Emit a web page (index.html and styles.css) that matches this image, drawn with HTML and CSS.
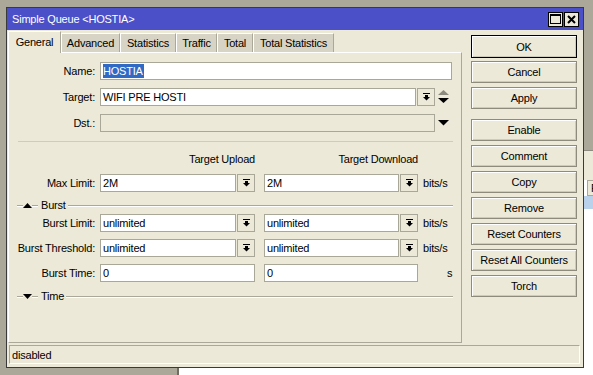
FILE: index.html
```html
<!DOCTYPE html>
<html>
<head>
<meta charset="utf-8">
<link rel="stylesheet" href="styles.css">
</head>
<body>
<div class="desktop">
  <div class="bgwin">
    <div class="bg-tool"></div>
    <div class="bg-head"><span class="bg-cell">F</span></div>
    <div class="bg-sel"></div>
  </div>

  <div class="window">
    <div class="titlebar">
      <span class="title">Simple Queue &lt;HOSTIA&gt;</span>
      <div class="tbtns">
        <span class="tbtn"><svg width="11" height="10" viewBox="0 0 11 10"><rect x="0.5" y="0.5" width="10" height="9" fill="none" stroke="#000"/><rect x="0" y="0" width="11" height="2" fill="#000"/></svg></span>
        <span class="tbtn"><svg width="9" height="9" viewBox="0 0 9 9"><path d="M1 1 L8 8 M8 1 L1 8" stroke="#000" stroke-width="2"/></svg></span>
      </div>
    </div>

    <div class="main">
      <div class="left">
        <div class="tabs">
          <span class="tab active w1">General</span>
          <span class="tab w2">Advanced</span>
          <span class="tab w3">Statistics</span>
          <span class="tab w4">Traffic</span>
          <span class="tab w5">Total</span>
          <span class="tab w6">Total Statistics</span>
        </div>
        <div class="panel">
          <div class="row first">
            <span class="lbl">Name:</span>
            <span class="inp w-name"><span class="sel">HOSTIA</span></span>
          </div>
          <div class="row">
            <span class="lbl">Target:</span>
            <span class="inp w-target">WIFI PRE HOSTI</span>
            <span class="dd"><svg width="7" height="8" viewBox="0 0 7 8"><rect x="0" y="0" width="7" height="1" fill="#000"/><rect x="2" y="2" width="3" height="2" fill="#000"/><path d="M0 4 L7 4 L3.5 7.5 Z" fill="#000"/></svg></span>
            <span class="arrows"><svg width="11" height="14" viewBox="0 0 11 14"><path d="M0 5 L11 5 L5.5 0 Z" fill="#8c8a7e"/><path d="M0 8 L11 8 L5.5 13 Z" fill="#000"/></svg></span>
          </div>
          <div class="row">
            <span class="lbl">Dst.:</span>
            <span class="inp dis w-dst"></span>
            <span class="arrows"><svg width="11" height="6" viewBox="0 0 11 6"><path d="M0 0 L11 0 L5.5 5.5 Z" fill="#000"/></svg></span>
          </div>
          <div class="sep"></div>
          <div class="hrow">
            <span class="lblsp"></span>
            <span class="col hcol">Target Upload</span>
            <span class="col col2 hcol">Target Download</span>
          </div>
          <div class="row">
            <span class="lbl">Max Limit:</span>
            <span class="col"><span class="inp grow">2M</span><span class="dd"><svg width="7" height="8" viewBox="0 0 7 8"><rect x="0" y="0" width="7" height="1" fill="#000"/><rect x="2" y="2" width="3" height="2" fill="#000"/><path d="M0 4 L7 4 L3.5 7.5 Z" fill="#000"/></svg></span></span>
            <span class="col col2"><span class="inp grow">2M</span><span class="dd"><svg width="7" height="8" viewBox="0 0 7 8"><rect x="0" y="0" width="7" height="1" fill="#000"/><rect x="2" y="2" width="3" height="2" fill="#000"/><path d="M0 4 L7 4 L3.5 7.5 Z" fill="#000"/></svg></span></span>
            <span class="unit">bits/s</span>
          </div>
          <div class="ghead">
            <span class="gl short"></span>
            <svg class="gtri" width="9" height="5" viewBox="0 0 9 5"><path d="M0 5 L9 5 L4.5 0 Z" fill="#000"/></svg>
            <span class="gl short"></span>
            <span class="gtext">Burst</span>
            <span class="gl long"></span>
          </div>
          <div class="row tight first-b">
            <span class="lbl">Burst Limit:</span>
            <span class="col"><span class="inp grow">unlimited</span><span class="dd"><svg width="7" height="8" viewBox="0 0 7 8"><rect x="0" y="0" width="7" height="1" fill="#000"/><rect x="2" y="2" width="3" height="2" fill="#000"/><path d="M0 4 L7 4 L3.5 7.5 Z" fill="#000"/></svg></span></span>
            <span class="col col2"><span class="inp grow">unlimited</span><span class="dd"><svg width="7" height="8" viewBox="0 0 7 8"><rect x="0" y="0" width="7" height="1" fill="#000"/><rect x="2" y="2" width="3" height="2" fill="#000"/><path d="M0 4 L7 4 L3.5 7.5 Z" fill="#000"/></svg></span></span>
            <span class="unit">bits/s</span>
          </div>
          <div class="row tight">
            <span class="lbl">Burst Threshold:</span>
            <span class="col"><span class="inp grow">unlimited</span><span class="dd"><svg width="7" height="8" viewBox="0 0 7 8"><rect x="0" y="0" width="7" height="1" fill="#000"/><rect x="2" y="2" width="3" height="2" fill="#000"/><path d="M0 4 L7 4 L3.5 7.5 Z" fill="#000"/></svg></span></span>
            <span class="col col2"><span class="inp grow">unlimited</span><span class="dd"><svg width="7" height="8" viewBox="0 0 7 8"><rect x="0" y="0" width="7" height="1" fill="#000"/><rect x="2" y="2" width="3" height="2" fill="#000"/><path d="M0 4 L7 4 L3.5 7.5 Z" fill="#000"/></svg></span></span>
            <span class="unit">bits/s</span>
          </div>
          <div class="row tight">
            <span class="lbl">Burst Time:</span>
            <span class="col"><span class="inp grow">0</span></span>
            <span class="col col2"><span class="inp grow">0</span></span>
            <span class="unit unit-s">s</span>
          </div>
          <div class="ghead g2">
            <span class="gl short"></span>
            <svg class="gtri" width="9" height="5" viewBox="0 0 9 5"><path d="M0 0 L9 0 L4.5 5 Z" fill="#000"/></svg>
            <span class="gl short"></span>
            <span class="gtext">Time</span>
            <span class="gl long"></span>
          </div>
        </div>
      </div>

      <div class="buttons">
        <span class="btn ok">OK</span>
        <span class="btn">Cancel</span>
        <span class="btn gapafter">Apply</span>
        <span class="btn">Enable</span>
        <span class="btn">Comment</span>
        <span class="btn">Copy</span>
        <span class="btn">Remove</span>
        <span class="btn">Reset Counters</span>
        <span class="btn">Reset All Counters</span>
        <span class="btn">Torch</span>
      </div>
    </div>

    <div class="status">disabled</div>
  </div>
</div>
</body>
</html>
```

FILE: styles.css
```css
* { box-sizing: border-box; }

html, body {
  margin: 0;
  padding: 0;
}

body {
  width: 593px;
  height: 375px;
  overflow: hidden;
  background: #aca899;
  font-family: "Liberation Sans", Arial, sans-serif;
  font-size: 11px;
  letter-spacing: -0.2px;
  color: #000;
}

.desktop {
  position: relative;
  width: 593px;
  height: 375px;
}

/* window behind the dialog */
.bgwin {
  position: absolute;
  left: 177px;
  top: 150px;
  width: 430px;
  height: 240px;
  background: #fff;
  border-left: 2px solid #6f6d62;
  display: flex;
  flex-direction: column;
}

.bg-tool {
  height: 30px;
  background: #ece9d8;
  border-top: 1px solid #8c8a7e;
}

.bg-head {
  height: 16px;
  display: flex;
  justify-content: flex-end;
  background: #fff;
}

.bg-cell {
  width: 20px;
  margin-right: 0;
  border: 1px solid #aca899;
  background: #ece9d8;
  padding-left: 3px;
  line-height: 14px;
}

.bg-sel {
  height: 13px;
  background: #b9d1ea;
}

/* dialog window */
.window {
  position: absolute;
  left: 6px;
  top: 7px;
  width: 578px;
  height: 361px;
  background: #ece9d8;
  border: 1px solid #3a3a3a;
  display: flex;
  flex-direction: column;
}

.titlebar {
  height: 22px;
  flex: none;
  background: #4b50c8;
  color: #fff;
  display: flex;
  align-items: center;
  justify-content: space-between;
  padding: 0 4px 0 5px;
}

.title {
  font-size: 11px;
}

.tbtns {
  display: flex;
  gap: 1px;
}

.tbtn {
  width: 15px;
  height: 15px;
  background: #ece9d8;
  border: 1px solid #000;
  display: flex;
  align-items: center;
  justify-content: center;
}

.main {
  height: 313px;
  flex: none;
  display: flex;
  gap: 9px;
  padding: 0 6px 0 1px;
}

.left {
  width: 454px;
  display: flex;
  flex-direction: column;
}

.tabs {
  height: 22px;
  display: flex;
  align-items: flex-end;
  position: relative;
  z-index: 1;
}

.tab {
  height: 19px;
  background: #d8d4c5;
  border-top: 1px solid #fff;
  border-left: 1px solid #fff;
  border-right: 1px solid #aca899;
  display: flex;
  align-items: center;
  justify-content: center;
  white-space: nowrap;
}

.tab.active {
  height: 22px;
  margin-bottom: -1px;
  background: #ece9d8;
  border-right-color: #aca899;
  padding-bottom: 2px;
}

.w1 { width: 53px; }
.w2 { width: 59px; }
.w3 { width: 56px; }
.w4 { width: 41px; }
.w5 { width: 36px; }
.w6 { width: 81px; }

.panel {
  flex: 1;
  border: 1px solid;
  border-color: #fff #aca899 #aca899 #fff;
  padding: 1px 0 0 0;
  display: flex;
  flex-direction: column;
}

.row {
  display: flex;
  align-items: center;
  height: 18px;
  margin-top: 8px;
}

.row.tight { margin-top: 7px; }
.row.first-b { margin-top: 2px; }

.lbl, .lblsp {
  width: 91px;
  flex: none;
  text-align: right;
  padding-right: 5px;
  white-space: nowrap;
}

.inp {
  height: 18px;
  background: #fff;
  border: 1px solid #a9a797;
  padding-left: 2px;
  display: flex;
  align-items: center;
  white-space: nowrap;
  overflow: hidden;
}

.inp.dis { background: #ece9d8; }

.w-name { width: 352px; }
.w-target { width: 316px; }
.w-dst { width: 335px; }

.sel {
  background: #316ac5;
  color: #fff;
  line-height: 14px;
  padding-right: 1px;
}

.dd {
  width: 18px;
  height: 18px;
  flex: none;
  margin-left: 1px;
  background: #ece9d8;
  border: 1px solid #a9a797;
  display: flex;
  align-items: center;
  justify-content: center;
}

.arrows {
  margin-left: 3px;
  display: flex;
  align-items: center;
}

.sep {
  margin: 9px 8px 0 9px;
  height: 1px;
  background: #d0ccbc;
}

.hrow {
  display: flex;
  height: 14px;
  margin-top: 10px;
  align-items: center;
}

.col {
  width: 155px;
  flex: none;
  display: flex;
  align-items: center;
}

.col.col2 {
  width: 154px;
  margin-left: 9px;
}

.hcol {
  justify-content: flex-end;
  margin-right: -2px;
  white-space: nowrap;
}

.hcol.col2 { margin-left: 11px; }

.grow { flex: 1; }

.unit {
  margin-left: 5px;
}

.unit-s {
  margin-left: 29px;
}

.ghead {
  display: flex;
  align-items: center;
  height: 14px;
  margin: 6px 8px 0 8px;
}

.ghead.g2 { margin-top: 7px; }

.gl {
  height: 1px;
  background: #aca899;
  box-shadow: 0 1px 0 #fff;
}

.gl.short { width: 6px; }
.gl.long { flex: 1; }

.gtri { margin: 0 0 0 0; flex: none; }

.gtext {
  margin: 0 2px 0 3px;
}

.buttons {
  width: 106px;
  flex: none;
  display: flex;
  flex-direction: column;
  padding-top: 5px;
}

.btn {
  height: 22px;
  margin-bottom: 4px;
  background: #ece9d8;
  border: 1px solid #8e8b7c;
  box-shadow: inset 1px 1px 0 #fff, inset -1px -1px 0 #cfcbbb;
  display: flex;
  align-items: center;
  justify-content: center;
  white-space: nowrap;
}

.btn.ok {
  height: 23px;
  margin-bottom: 3px;
  border-color: #000;
}

.btn.gapafter { margin-bottom: 10px; }

.status {
  height: 19px;
  flex: none;
  margin: 2px 3px 0 2px;
  border: 1px solid;
  border-color: #aca899 #fff #fff #aca899;
  padding-left: 2px;
  display: flex;
  align-items: center;
}
```
